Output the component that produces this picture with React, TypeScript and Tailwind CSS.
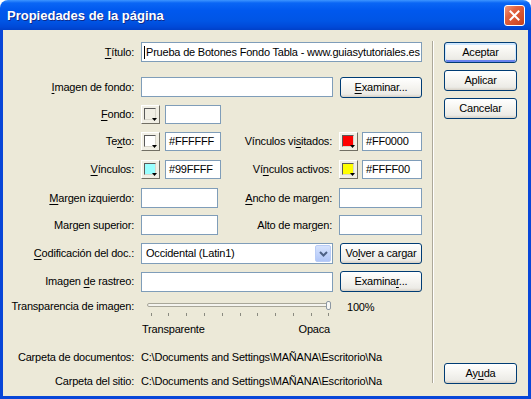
import React from "react";

function Label({ children, className = "" }: { children: React.ReactNode; className?: string }) {
  return (
    <div className={`w-[131px] shrink-0 text-right whitespace-nowrap ${className}`}>
      {children}
    </div>
  );
}

function U({ children }: { children: React.ReactNode }) {
  return <span className="underline underline-offset-[2px]">{children}</span>;
}

function XPButton({ children, className = "", def = false }: { children: React.ReactNode; className?: string; def?: boolean }) {
  return (
    <div
      className={`h-[21px] shrink-0 rounded-[3px] border border-[#003C74] bg-[linear-gradient(180deg,#FFFFFF_0%,#F6F5F1_45%,#ECEBE6_85%,#D6D0C5_100%)] flex items-center justify-center text-black ${
        def ? "shadow-[inset_0_1px_0_1px_#CEE7FF,inset_0_-1px_0_1px_#6982EE]" : ""
      } ${className}`}
    >
      {children}
    </div>
  );
}

function Field({ className = "", children }: { className?: string; children?: React.ReactNode }) {
  return (
    <div className={`shrink-0 border border-[#7F9DB9] bg-white flex items-center overflow-hidden whitespace-nowrap ${className}`}>
      {children}
    </div>
  );
}

function Swatch({ fill }: { fill: string }) {
  return (
    <div className="relative w-[19px] h-[19px] shrink-0 border border-t-white border-l-white border-r-[#716F64] border-b-[#716F64] bg-[#F1EFE5]">
      <div className={`absolute left-[2px] top-[2px] w-[12px] h-[12px] border border-t-[#5A5A5A] border-l-[#5A5A5A] border-r-[#D8D6CC] border-b-[#D8D6CC] ${fill}`} />
      <svg className="absolute right-[1px] bottom-[1px]" width="6" height="4" viewBox="0 0 6 4">
        <polygon points="0,0 5,0 2.5,3" fill="#000" />
      </svg>
    </div>
  );
}

function Slider() {
  const ticks = Array.from({ length: 11 }, (_, i) => 9.7 + i * 17.77);
  return (
    <svg width="194" height="20" viewBox="0 0 194 20" className="shrink-0">
      <rect x="6.5" y="5.5" width="183" height="3" rx="1.5" fill="#F4F3EE" stroke="#A8A699" />
      {ticks.map((x) => (
        <line key={x} x1={Math.round(x) + 0.5} y1="15" x2={Math.round(x) + 0.5} y2="18" stroke="#8A8A80" />
      ))}
      <rect x="185.5" y="3.5" width="4" height="8" rx="1.5" fill="#F7F7F4" stroke="#8C97A3" />
    </svg>
  );
}

export default function App() {
  return (
    <div className="w-[531px] h-[399px] bg-white font-['Liberation_Sans',Arial,sans-serif] text-[11px] tracking-[-0.2px] text-black flex flex-col">
      {/* title bar */}
      <div className="h-[30px] shrink-0 rounded-t-[8px] bg-[linear-gradient(180deg,#3D95FF_0%,#0A66F5_10%,#0058EE_35%,#0055E5_70%,#0049D8_90%,#0040C8_100%)] flex items-center justify-between pl-[7px] pr-[6px]">
        <span className="pt-[2px] text-[13px] tracking-normal font-bold text-white [text-shadow:1px_1px_0_#0F2A8A]">
          Propiedades de la página
        </span>
        <div className="w-[21px] h-[21px] rounded-[3px] border border-white bg-[linear-gradient(135deg,#F19A7F_0%,#E2623F_35%,#D4502C_70%,#C5401D_100%)] flex items-center justify-center">
          <svg width="11" height="11" viewBox="0 0 11 11">
            <path d="M1.5 1.5 L9.5 9.5 M9.5 1.5 L1.5 9.5" stroke="#fff" strokeWidth="2" strokeLinecap="square" />
          </svg>
        </div>
      </div>

      {/* client */}
      <div className="flex-1 flex border-x-[3px] border-b-[3px] border-[#0846D8] bg-[#ECE9D8]">
        <div className="w-[429px] shrink-0 flex flex-col">
          <div className="mt-[12px] h-[20px] flex items-center">
            <Label>
              <U>T</U>ítulo:
            </Label>
            <Field className="ml-[7px] w-[281px] h-[20px]">
              <span className="ml-[2px] w-[1px] h-[13px] bg-black" />
              <span className="ml-[1px]">Prueba de Botones Fondo Tabla - www.guiasytutoriales.es</span>
            </Field>
          </div>

          <div className="mt-[15px] h-[20px] flex items-center">
            <Label>
              <U>I</U>magen de fondo:
            </Label>
            <Field className="ml-[7px] w-[192px] h-[20px]" />
            <XPButton className="ml-[7px] w-[82px]">
              <span>
                <U>E</U>xaminar...
              </span>
            </XPButton>
          </div>

          <div className="mt-[8px] h-[19px] flex items-center">
            <Label>
              <U>F</U>ondo:
            </Label>
            <div className="ml-[7px]">
              <Swatch fill="bg-[#F1EFE5]" />
            </div>
            <Field className="ml-[5px] w-[56px] h-[19px]" />
          </div>

          <div className="mt-[8px] h-[19px] flex items-center">
            <Label>
              Te<U>x</U>to:
            </Label>
            <div className="ml-[7px]">
              <Swatch fill="bg-white" />
            </div>
            <Field className="ml-[5px] w-[56px] h-[19px] pl-[3px]">#FFFFFF</Field>
            <div className="w-[111px] shrink-0 text-right whitespace-nowrap">
              Vínculos vi<U>s</U>itados:
            </div>
            <div className="ml-[7px]">
              <Swatch fill="bg-[#FF0000]" />
            </div>
            <Field className="ml-[4px] w-[60px] h-[19px] pl-[3px]">#FF0000</Field>
          </div>

          <div className="mt-[9px] h-[19px] flex items-center">
            <Label>
              <U>V</U>ínculos:
            </Label>
            <div className="ml-[7px]">
              <Swatch fill="bg-[#99FFFF]" />
            </div>
            <Field className="ml-[5px] w-[56px] h-[19px] pl-[3px]">#99FFFF</Field>
            <div className="w-[111px] shrink-0 text-right whitespace-nowrap">
              Ví<U>n</U>culos activos:
            </div>
            <div className="ml-[7px]">
              <Swatch fill="bg-[#FFFF00]" />
            </div>
            <Field className="ml-[4px] w-[60px] h-[19px] pl-[3px]">#FFFF00</Field>
          </div>

          <div className="mt-[9px] h-[20px] flex items-center">
            <Label>
              <U>M</U>argen izquierdo:
            </Label>
            <Field className="ml-[7px] w-[77px] h-[20px]" />
            <div className="w-[114px] shrink-0 text-right whitespace-nowrap">
              <U>A</U>ncho de margen:
            </div>
            <Field className="ml-[7px] w-[83px] h-[20px]" />
          </div>

          <div className="mt-[7px] h-[20px] flex items-center">
            <Label>Margen superior:</Label>
            <Field className="ml-[7px] w-[77px] h-[20px]" />
            <div className="w-[114px] shrink-0 text-right whitespace-nowrap">
              Alto de mar<U>g</U>en:
            </div>
            <Field className="ml-[7px] w-[83px] h-[20px]" />
          </div>

          <div className="mt-[8px] h-[21px] flex items-center">
            <Label>
              <U>C</U>odificación del doc.:
            </Label>
            <Field className="ml-[7px] w-[192px] h-[21px] justify-between">
              <span className="pl-[4px]">Occidental (Latin1)</span>
              <div className="mr-[1px] w-[16px] h-[17px] rounded-[2px] border border-[#B9CCF6] bg-[linear-gradient(180deg,#D6E3FD_0%,#C1D3FB_55%,#B0C6F7_100%)] flex items-center justify-center">
                <svg width="9" height="6" viewBox="0 0 9 6">
                  <path d="M1 1 L4.5 4.5 L8 1" fill="none" stroke="#4D6185" strokeWidth="2" />
                </svg>
              </div>
            </Field>
            <XPButton className="ml-[7px] w-[82px]">
              <span>
                Vo<U>l</U>ver a cargar
              </span>
            </XPButton>
          </div>

          <div className="mt-[7px] h-[21px] flex items-center">
            <Label>
              Imagen <U>d</U>e rastreo:
            </Label>
            <Field className="ml-[7px] w-[192px] h-[20px]" />
            <XPButton className="ml-[7px] w-[82px]">
              <span>
                Examina<U>r</U>...
              </span>
            </XPButton>
          </div>

          <div className="mt-[6px] h-[20px] flex items-center">
            <Label className="pb-[4px]">Transparencia de imagen:</Label>
            <div className="ml-[7px]">
              <Slider />
            </div>
            <span className="ml-[12px] pb-[2px]">100%</span>
          </div>

          <div className="mt-[5px] h-[13px] flex items-center">
            <div className="ml-[139px] w-[188px] flex justify-between">
              <span>Transparente</span>
              <span>Opaca</span>
            </div>
          </div>

          <div className="mt-[14px] h-[14px] flex items-center">
            <Label>Carpeta de documentos:</Label>
            <div className="ml-[7px] w-[248px] overflow-hidden whitespace-nowrap">
              C:\Documents and Settings\MAÑANA\Escritorio\Na
            </div>
          </div>

          <div className="mt-[10px] h-[14px] flex items-center">
            <Label>Carpeta del sitio:</Label>
            <div className="ml-[7px] w-[248px] overflow-hidden whitespace-nowrap">
              C:\Documents and Settings\MAÑANA\Escritorio\Na
            </div>
          </div>
        </div>

        <div className="mt-[11px] h-[342px] w-[2px] shrink-0 border-l border-l-[#ACA899] border-r border-r-white" />

        <div className="flex-1 flex flex-col pl-[10px] pt-[12px] pb-[12px]">
          <XPButton def className="w-[73px]">
            Aceptar
          </XPButton>
          <XPButton className="mt-[7px] w-[73px]">Aplicar</XPButton>
          <XPButton className="mt-[7px] w-[73px]">Cancelar</XPButton>
          <div className="mt-auto">
            <XPButton className="w-[73px]">
              <span>
                Ay<U>u</U>da
              </span>
            </XPButton>
          </div>
        </div>
      </div>
    </div>
  );
}
